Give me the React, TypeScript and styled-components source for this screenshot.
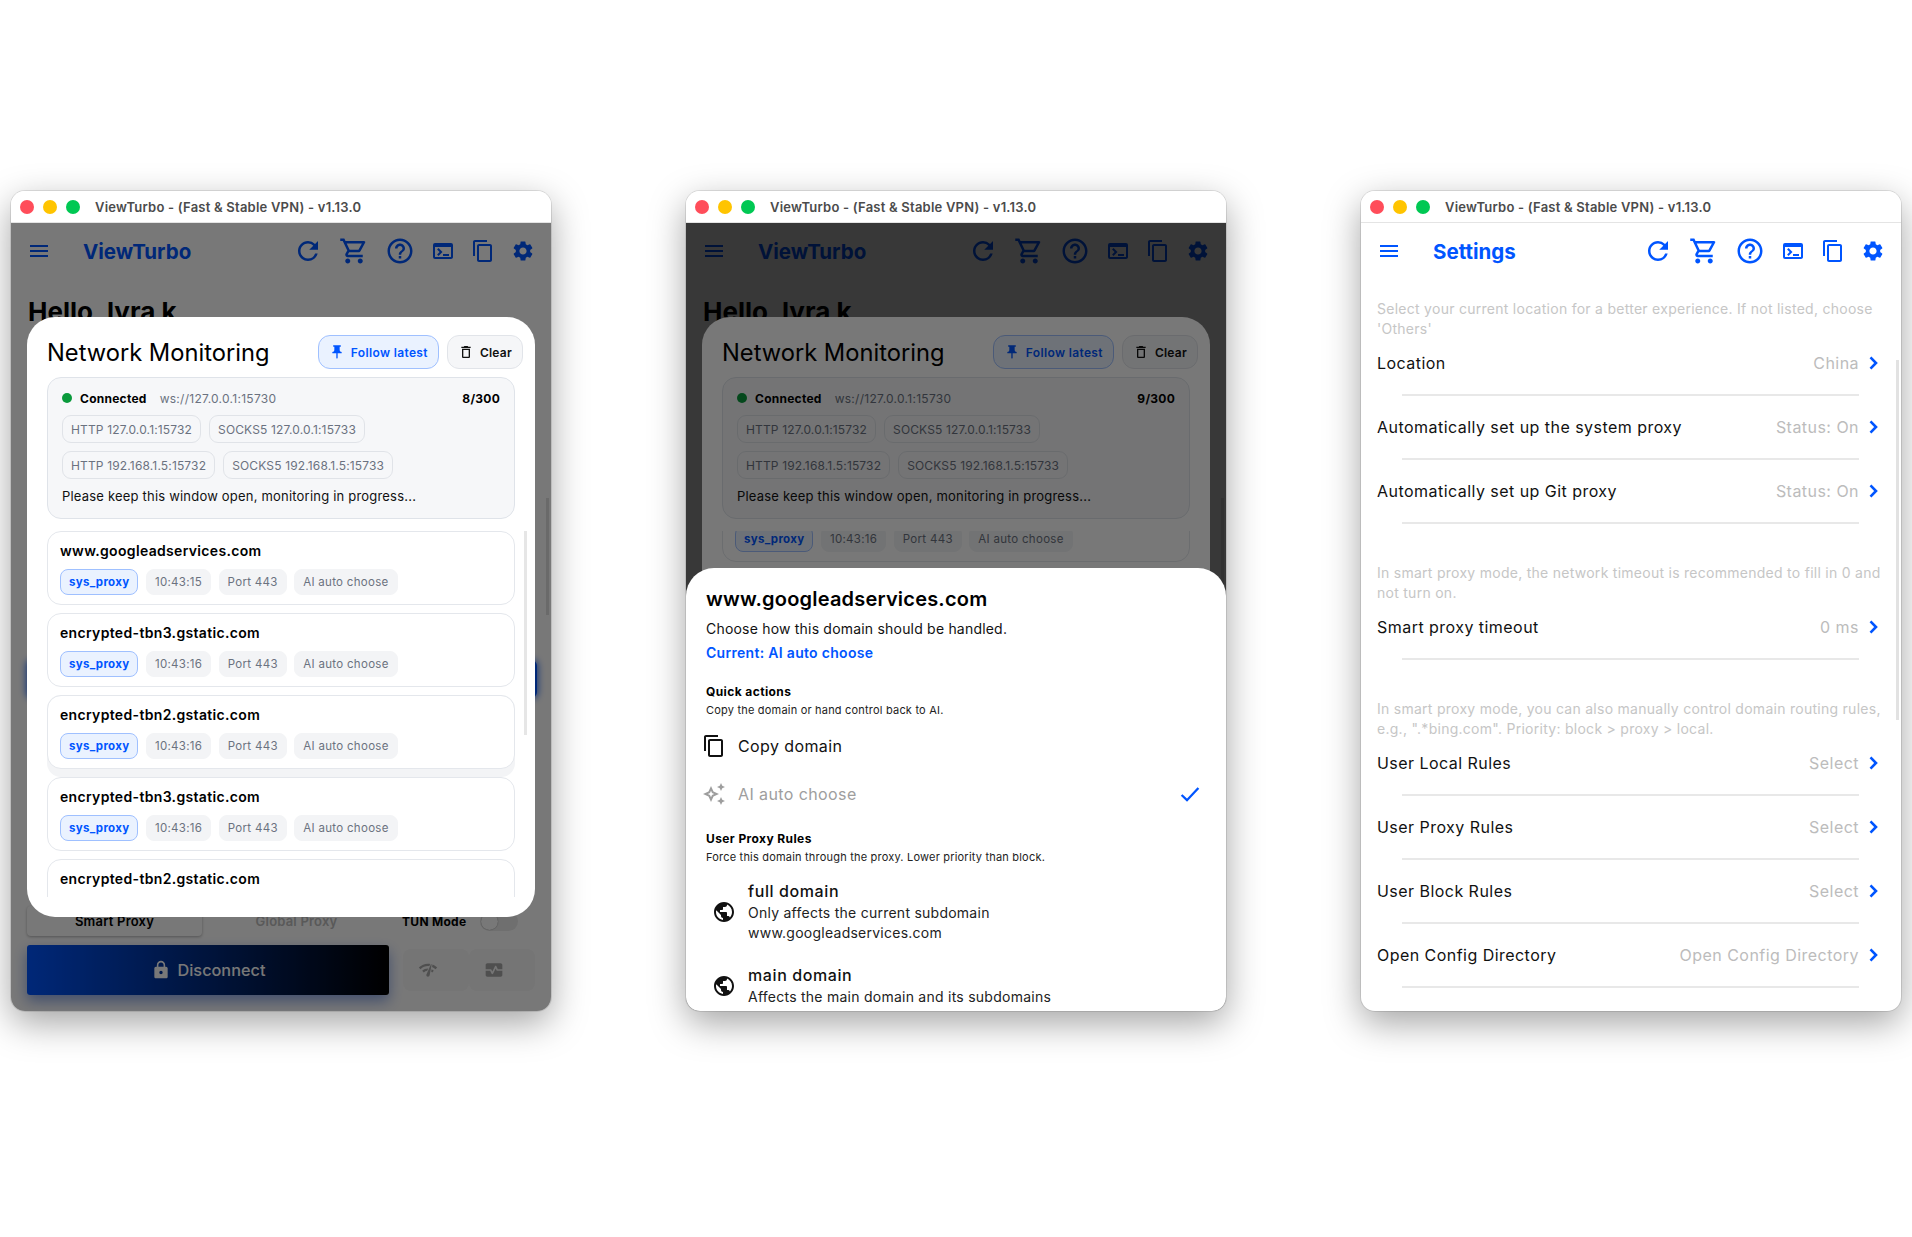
import React from "react";
import styled, { createGlobalStyle } from "styled-components";
import {
  MdMenu, MdRefresh, MdOutlineShoppingCart, MdHelpOutline, MdTerminal, MdContentCopy, MdSettings,
  MdPushPin, MdOutlineDelete, MdLock, MdNetworkCheck, MdMonitorHeart, MdOutlineAutoAwesome,
  MdPublic,
} from "react-icons/md";

const Global = createGlobalStyle`
  html, body { margin: 0; padding: 0; background: #fff; }
  body { font-family: "Inter", "Liberation Sans", sans-serif; color: #111; height: 1237px; overflow: hidden; }
  * { box-sizing: border-box; }
`;

const BLUE = "#0055ff";

const Page = styled.div`
  display: flex;
  justify-content: space-between;
  padding: 191px 11px 0;
`;
const Win = styled.div`
  width: 540px;
  height: 820px;
  border-radius: 14px;
  overflow: hidden;
  display: flex;
  flex-direction: column;
  background: #fff;
  box-shadow: 0 0 0 1px rgba(0, 0, 0, 0.1), 0 12px 36px rgba(0, 0, 0, 0.36);
`;
const TitleBar = styled.div`
  height: 32px;
  flex: none;
  display: flex;
  align-items: center;
  padding-left: 9px;
  gap: 9px;
  background: #fff;
  border-bottom: 1px solid #e4e4e4;
`;
const Light = styled.span<{ $c: string }>`
  width: 14px;
  height: 14px;
  border-radius: 50%;
  background: ${(p) => p.$c};
`;
const TitleText = styled.span`
  margin-left: 6px;
  font-size: 13px;
  font-weight: 600;
  color: #4b4b4b;
  letter-spacing: 0.22px;
`;
const Content = styled.div`
  position: relative;
  flex: 1;
  overflow: hidden;
  display: flex;
  flex-direction: column;
`;
const Header = styled.div`
  height: 56px;
  flex: none;
  display: flex;
  align-items: center;
  padding: 0 16px;
  color: ${BLUE};
  svg { display: block; flex: none; }
`;
const HeaderTitle = styled.div`
  margin-left: 32px;
  font-size: 20.5px;
  font-weight: 700;
  color: ${BLUE};
`;
const HeaderIcons = styled.div`
  margin-left: auto;
  display: flex;
  align-items: center;
  gap: 16px;
`;
const Greeting = styled.div`
  margin: 17px 0 0 17px;
  font-size: 26px;
  line-height: 32px;
  font-weight: 700;
  color: #000;
`;
const PromoCard = styled.div`
  margin: 332px 14px 0 16px;
  height: 38px;
  border-radius: 6px;
  background: ${BLUE};
  box-shadow: 0 0 7px 1px rgba(0, 85, 255, 0.8);
`;
const ModeRow = styled.div`
  margin-top: 208px;
  padding-left: 16px;
  height: 30px;
  display: flex;
  align-items: center;
`;
const ModeTab = styled.div<{ $active?: boolean }>`
  width: 175px;
  height: 30px;
  margin-right: ${(p) => (p.$active ? 7 : 18)}px;
  border-radius: 4px;
  display: flex;
  align-items: flex-start;
  justify-content: center;
  padding-top: 8px;
  font-size: 13px;
  line-height: 15px;
  font-weight: 600;
  letter-spacing: 0.2px;
  color: ${(p) => (p.$active ? "#000" : "#bdbdbd")};
  background: ${(p) => (p.$active ? "#fff" : "transparent")};
  box-shadow: ${(p) => (p.$active ? "0 1px 3px rgba(0,0,0,.3)" : "none")};
`;
const TunLabel = styled.div`
  width: 65px;
  font-size: 12px;
  font-weight: 700;
  letter-spacing: 0.3px;
  color: #000;
`;
const Switch = styled.div`
  margin-left: 13px;
  width: 38px;
  height: 19px;
  border-radius: 10px;
  background: #ececec;
  padding: 1px;
`;
const Knob = styled.div`
  width: 17px;
  height: 17px;
  border-radius: 50%;
  background: #fff;
  box-shadow: 0 0 1px rgba(0, 0, 0, 0.5);
`;
const ConnectRow = styled.div`
  margin-top: 9px;
  padding: 0 16px;
  display: flex;
  align-items: center;
`;
const ConnectBtn = styled.div`
  width: 362px;
  height: 50px;
  flex: none;
  border-radius: 3px;
  background: linear-gradient(90deg, ${BLUE}, #000);
  color: #fff;
  display: flex;
  align-items: center;
  justify-content: center;
  gap: 7px;
  font-size: 16.3px;
  font-weight: 500;
  box-shadow: 0 6px 14px rgba(0, 60, 200, 0.45);
`;
const SideBtn = styled.div<{ $first?: boolean }>`
  width: 66px;
  height: 42px;
  flex: none;
  margin-left: ${(p) => (p.$first ? "14px" : "0")};
  border-radius: 8px;
  background: #f8f8f8;
  color: #a8a8a8;
  display: flex;
  align-items: center;
  justify-content: center;
  padding-right: 16px;
`;
const ScrollThumb = styled.div<{ $top: number; $h: number }>`
  position: absolute;
  right: 2px;
  top: ${(p) => p.$top}px;
  height: ${(p) => p.$h}px;
  width: 3px;
  background: #e2e2e2;
`;
const Scrim = styled.div`
  position: absolute;
  inset: 0;
  background: rgba(0, 0, 0, 0.53);
`;
const MonitorSheet = styled.div`
  position: absolute;
  left: 16px;
  right: 16px;
  top: 94px;
  height: 600px;
  border-radius: 28px;
  background: #fff;
  overflow: hidden;
  padding: 18px 20px 20px;
  display: flex;
  flex-direction: column;
`;
const MonitorHead = styled.div`
  height: 34px;
  flex: none;
  margin-right: -8px;
  display: flex;
  align-items: center;
  gap: 8px;
`;
const MonitorTitle = styled.div`
  margin-right: auto;
  padding-top: 2px;
  font-size: 23.7px;
  line-height: 34px;
  font-weight: 400;
  color: #000;
`;
const HeadBtn = styled.div<{ $on?: boolean }>`
  height: 34px;
  border-radius: 12px;
  display: flex;
  align-items: center;
  gap: 6px;
  font-size: 12px;
  font-weight: 600;
  letter-spacing: ${(p) => (p.$on ? 0.35 : 0.25)}px;
  padding: 0 10px;
  color: ${(p) => (p.$on ? BLUE : "#111")};
  background: ${(p) => (p.$on ? "#eaf2ff" : "#f5f6f8")};
  border: 1px solid ${(p) => (p.$on ? "#9fc0ff" : "#e1e4e9")};
`;
const StatusCard = styled.div`
  margin-top: 8px;
  flex: none;
  height: 142px;
  border-radius: 14px;
  background: #f6f7f9;
  border: 1px solid #dfe3e9;
  padding: 11px 14px;
`;
const StatusTop = styled.div`
  display: flex;
  align-items: center;
  height: 18px;
`;
const Dot = styled.span`
  width: 10px;
  height: 10px;
  border-radius: 50%;
  background: #0a9a3c;
  margin-right: 8px;
`;
const StatusStrong = styled.span`
  font-size: 12px;
  font-weight: 700;
  letter-spacing: 0.25px;
  color: #000;
`;
const StatusUrl = styled.span`
  margin-left: 13px;
  font-size: 12px;
  letter-spacing: 0.28px;
  color: #6b7280;
`;
const StatusCount = styled(StatusStrong)`
  margin-left: auto;
`;
const ChipWrap = styled.div`
  margin-top: 8px;
  display: flex;
  flex-wrap: wrap;
  gap: 8px;
`;
const AddrChip = styled.span`
  height: 28px;
  padding: 0 8px;
  border: 1px solid #e0e3e8;
  border-radius: 9px;
  background: #f6f7f9;
  display: flex;
  align-items: center;
  font-size: 12px;
  letter-spacing: 0.15px;
  color: #6b7280;
`;
const StatusNote = styled.div`
  margin-top: 9px;
  font-size: 13px;
  line-height: 16px;
  letter-spacing: 0.2px;
  color: #111;
`;
const ConnList = styled.div`
  margin-top: 12px;
  flex: 1;
  min-height: 0;
  overflow: hidden;
`;
const ConnInner = styled.div<{ $shift?: number }>`
  margin-top: ${(p) => p.$shift ?? 0}px;
  display: flex;
  flex-direction: column;
`;
const ConnSlot = styled.div<{ $hover?: boolean }>`
  padding-bottom: 8px;
  border-radius: 14px;
  background: ${(p) => (p.$hover ? "#f3f4f6" : "transparent")};
`;
const ConnCard = styled.div`
  height: 74px;
  border-radius: 14px;
  border: 1px solid #e4e7ec;
  background: #fff;
  padding: 10px 12px;
`;
const ConnDomain = styled.div`
  font-size: 14px;
  line-height: 18px;
  font-weight: 600;
  letter-spacing: 0.33px;
  color: #000;
`;
const ConnChips = styled.div`
  margin-top: 9px;
  display: flex;
  gap: 7.5px;
`;
const ConnChip = styled.span<{ $proxy?: boolean }>`
  height: 26px;
  padding: 0 8px;
  border-radius: 8px;
  display: flex;
  align-items: center;
  font-size: 11.5px;
  letter-spacing: 0.3px;
  font-weight: ${(p) => (p.$proxy ? 700 : 400)};
  color: ${(p) => (p.$proxy ? BLUE : "#6b7280")};
  background: ${(p) => (p.$proxy ? "#eaf2ff" : "#f3f4f6")};
  border: 1px solid ${(p) => (p.$proxy ? "#9fc0ff" : "#f3f4f6")};
`;
const SheetThumb = styled.div`
  position: absolute;
  right: 8px;
  top: 214px;
  width: 3px;
  height: 204px;
  background: #e6e6e6;
`;
const DomainSheet = styled.div`
  position: absolute;
  left: 0;
  right: 0;
  top: 345px;
  bottom: 0;
  background: #fff;
  border-radius: 28px 28px 0 0;
  overflow: hidden;
  padding: 17px 20px 0;
`;
const SheetDomain = styled.div`
  font-size: 20px;
  line-height: 28px;
  font-weight: 600;
  color: #000;
  letter-spacing: 0.2px;
`;
const SheetDesc = styled.div`
  margin-top: 6px;
  font-size: 14px;
  line-height: 20px;
  letter-spacing: 0.2px;
  color: #111;
`;
const SheetCurrent = styled.div`
  margin-top: 4px;
  font-size: 14px;
  line-height: 20px;
  font-weight: 600;
  letter-spacing: 0.3px;
  color: ${BLUE};
`;
const SectionTitle = styled.div<{ $top: number }>`
  margin-top: ${(p) => p.$top}px;
  font-size: 12px;
  line-height: 16px;
  font-weight: 700;
  letter-spacing: 0.4px;
  color: #000;
`;
const SectionSub = styled.div`
  margin-top: 3px;
  font-size: 11px;
  line-height: 14px;
  letter-spacing: 0.2px;
  color: #222;
`;
const ActionRow = styled.div<{ $off?: boolean }>`
  height: 48px;
  margin-left: -4px;
  padding-right: 4px;
  display: flex;
  align-items: center;
  gap: 12px;
  font-size: 16px;
  letter-spacing: 0.4px;
  color: ${(p) => (p.$off ? "#9e9e9e" : "#111")};
  svg { display: block; flex: none; }
`;
const ActionsTop = styled.div`
  margin-top: 5px;
`;
const CheckMark = styled.span`
  margin-left: auto;
  color: ${BLUE};
  display: flex;
`;
const OptionRow = styled.div<{ $top: number }>`
  margin-top: ${(p) => p.$top}px;
  padding-left: 6px;
  display: flex;
  align-items: center;
  gap: 12px;
  svg { display: block; flex: none; }
`;
const OptionName = styled.div`
  font-size: 16px;
  line-height: 23px;
  letter-spacing: 0.6px;
  font-weight: 500;
  color: #111;
`;
const OptionSub = styled.div`
  font-size: 14px;
  line-height: 20px;
  letter-spacing: 0.25px;
  color: #222;
`;
const Hint = styled.div<{ $top: number }>`
  margin: ${(p) => p.$top}px 16px -7px;
  font-size: 14px;
  line-height: 20px;
  letter-spacing: 0.27px;
  color: #c6c6c6;
`;
const SettingRow = styled.div`
  flex: none;
`;
const RowLine = styled.div`
  height: 62px;
  padding: 0 16px;
  display: flex;
  align-items: center;
  font-size: 16px;
  letter-spacing: 0.46px;
  color: #111;
  svg { display: block; flex: none; color: ${BLUE}; }
`;
const RowValue = styled.span`
  margin-left: auto;
  margin-right: 2px;
  color: #bcbcbc;
`;
const RowRule = styled.div`
  height: 2px;
  margin: 0 42px 0 41px;
  background: #e8e8e8;
`;

const ChevronGlyph = () => (
  <svg width="24" height="24" viewBox="0 0 24 24" fill="none" stroke="currentColor" strokeWidth="2.6">
    <polyline points="9.5,6.4 15,12 9.5,17.6" />
  </svg>
);
const CheckGlyph = () => (
  <svg width="24" height="24" viewBox="0 0 24 24" fill="none" stroke="currentColor" strokeWidth="2.3">
    <polyline points="3.6,13 9,18.2 20.4,6" />
  </svg>
);

const Traffic = () => (
  <TitleBar>
    <Light $c="#ff4d5a" />
    <Light $c="#ffc400" />
    <Light $c="#00c853" />
    <TitleText>ViewTurbo - (Fast &amp; Stable VPN) - v1.13.0</TitleText>
  </TitleBar>
);

const TopBar = ({ title }: { title: string }) => (
  <Header>
    <MdMenu size={24} />
    <HeaderTitle>{title}</HeaderTitle>
    <HeaderIcons>
      <MdRefresh size={30} />
      <MdOutlineShoppingCart size={30} />
      <MdHelpOutline size={30} />
      <MdTerminal size={24} />
      <MdContentCopy size={24} />
      <MdSettings size={24} />
    </HeaderIcons>
  </Header>
);

const Home = () => (
  <>
    <TopBar title="ViewTurbo" />
    <Greeting>Hello, lyra k</Greeting>
    <PromoCard />
    <ModeRow>
      <ModeTab $active>Smart Proxy</ModeTab>
      <ModeTab>Global Proxy</ModeTab>
      <TunLabel>TUN Mode</TunLabel>
      <Switch><Knob /></Switch>
    </ModeRow>
    <ConnectRow>
      <ConnectBtn><MdLock size={20} />Disconnect</ConnectBtn>
      <SideBtn $first><MdNetworkCheck size={20} /></SideBtn>
      <SideBtn><MdMonitorHeart size={20} /></SideBtn>
    </ConnectRow>
    <ScrollThumb $top={275} $h={117} />
    <Scrim />
  </>
);

const conns = [
  ["www.googleadservices.com", "10:43:15"],
  ["encrypted-tbn3.gstatic.com", "10:43:16"],
  ["encrypted-tbn2.gstatic.com", "10:43:16"],
  ["encrypted-tbn3.gstatic.com", "10:43:16"],
  ["encrypted-tbn2.gstatic.com", "10:43:16"],
];

const Monitor = ({ count, shift, time, thumb }: { count: string; shift?: number; time?: string; thumb?: boolean }) => (
  <MonitorSheet>
    <MonitorHead>
      <MonitorTitle>Network Monitoring</MonitorTitle>
      <HeadBtn $on><MdPushPin size={16} />Follow latest</HeadBtn>
      <HeadBtn><MdOutlineDelete size={16} />Clear</HeadBtn>
    </MonitorHead>
    <StatusCard>
      <StatusTop>
        <Dot />
        <StatusStrong>Connected</StatusStrong>
        <StatusUrl>ws://127.0.0.1:15730</StatusUrl>
        <StatusCount>{count}</StatusCount>
      </StatusTop>
      <ChipWrap>
        <AddrChip>HTTP 127.0.0.1:15732</AddrChip>
        <AddrChip>SOCKS5 127.0.0.1:15733</AddrChip>
      </ChipWrap>
      <ChipWrap>
        <AddrChip>HTTP 192.168.1.5:15732</AddrChip>
        <AddrChip>SOCKS5 192.168.1.5:15733</AddrChip>
      </ChipWrap>
      <StatusNote>Please keep this window open, monitoring in progress...</StatusNote>
    </StatusCard>
    <ConnList>
      <ConnInner $shift={shift}>
        {conns.map(([d, t], i) => (
          <ConnSlot key={i} $hover={i === 2 && thumb}>
            <ConnCard>
              <ConnDomain>{d}</ConnDomain>
              <ConnChips>
                <ConnChip $proxy>sys_proxy</ConnChip>
                <ConnChip>{time ?? t}</ConnChip>
                <ConnChip>Port 443</ConnChip>
                <ConnChip>AI auto choose</ConnChip>
              </ConnChips>
            </ConnCard>
          </ConnSlot>
        ))}
      </ConnInner>
    </ConnList>
    {thumb && <SheetThumb />}
  </MonitorSheet>
);

const DomainPanel = () => (
  <DomainSheet>
    <SheetDomain>www.googleadservices.com</SheetDomain>
    <SheetDesc>Choose how this domain should be handled.</SheetDesc>
    <SheetCurrent>Current: AI auto choose</SheetCurrent>
    <SectionTitle $top={21}>Quick actions</SectionTitle>
    <SectionSub>Copy the domain or hand control back to AI.</SectionSub>
    <ActionsTop>
      <ActionRow><MdContentCopy size={24} />Copy domain</ActionRow>
      <ActionRow $off>
        <MdOutlineAutoAwesome size={24} />AI auto choose
        <CheckMark><CheckGlyph /></CheckMark>
      </ActionRow>
    </ActionsTop>
    <SectionTitle $top={13}>User Proxy Rules</SectionTitle>
    <SectionSub>Force this domain through the proxy. Lower priority than block.</SectionSub>
    <OptionRow $top={16}>
      <MdPublic size={24} />
      <div>
        <OptionName>full domain</OptionName>
        <OptionSub>Only affects the current subdomain</OptionSub>
        <OptionSub>www.googleadservices.com</OptionSub>
      </div>
    </OptionRow>
    <OptionRow $top={21}>
      <MdPublic size={24} />
      <div>
        <OptionName>main domain</OptionName>
        <OptionSub>Affects the main domain and its subdomains</OptionSub>
      </div>
    </OptionRow>
  </DomainSheet>
);

const Row = ({ label, value }: { label: string; value: string }) => (
  <SettingRow>
    <RowLine>
      {label}
      <RowValue>{value}</RowValue>
      <ChevronGlyph />
    </RowLine>
    <RowRule />
  </SettingRow>
);

const Settings = () => (
  <>
    <TopBar title="Settings" />
    <Hint $top={20}>Select your current location for a better experience. If not listed, choose 'Others'</Hint>
    <Row label="Location" value="China" />
    <Row label="Automatically set up the system proxy" value="Status: On" />
    <Row label="Automatically set up Git proxy" value="Status: On" />
    <Hint $top={39}>In smart proxy mode, the network timeout is recommended to fill in 0 and not turn on.</Hint>
    <Row label="Smart proxy timeout" value="0 ms" />
    <Hint $top={39}>In smart proxy mode, you can also manually control domain routing rules, e.g., ".*bing.com". Priority: block &gt; proxy &gt; local.</Hint>
    <Row label="User Local Rules" value="Select" />
    <Row label="User Proxy Rules" value="Select" />
    <Row label="User Block Rules" value="Select" />
    <Row label="Open Config Directory" value="Open Config Directory" />
    <ScrollThumb $top={137} $h={360} />
  </>
);

export default function App() {
  return (
    <>
      <Global />
      <Page>
        <Win>
          <Traffic />
          <Content>
            <Home />
            <Monitor count="8/300" thumb />
          </Content>
        </Win>
        <Win>
          <Traffic />
          <Content>
            <Home />
            <Monitor count="9/300" shift={-43} time="10:43:16" />
            <Scrim />
            <DomainPanel />
          </Content>
        </Win>
        <Win>
          <Traffic />
          <Content>
            <Settings />
          </Content>
        </Win>
      </Page>
    </>
  );
}
